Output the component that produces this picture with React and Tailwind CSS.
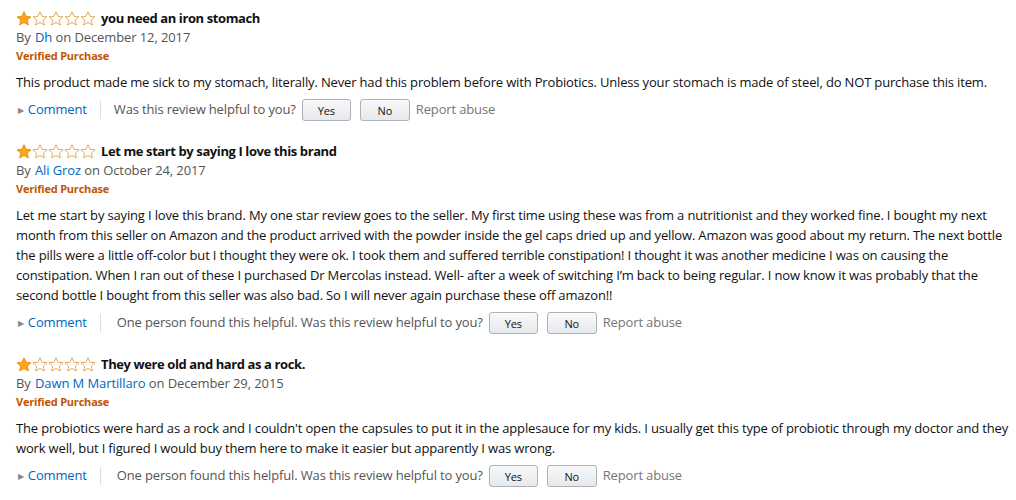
import React from "react";

const font = { fontFamily: '"Open Sans", "Noto Sans", sans-serif' };

function Star({ filled }) {
  return (
    <svg width="16" height="15" viewBox="0 0 24 23" className="shrink-0">
      <path
        d="M12 1.2l3.2 6.9 7.4.8-5.5 5.1 1.5 7.4L12 17.6l-6.6 3.8 1.5-7.4L1.4 8.9l7.4-.8z"
        fill={filled ? "#ffa41c" : "#fff"}
        stroke={filled ? "#e08a00" : "#de9a3a"}
        strokeWidth="1.3"
        strokeLinejoin="round"
      />
    </svg>
  );
}

function Stars() {
  return (
    <div className="flex items-center">
      <Star filled />
      <Star />
      <Star />
      <Star />
      <Star />
    </div>
  );
}

function Btn({ children, w }) {
  return (
    <button
      className={`h-[22px] ${w} rounded-[3px] border border-[#adb1b8] bg-gradient-to-b from-[#f7f8fa] to-[#e7e9ec] text-[11px] text-[#111] leading-none shadow-[inset_0_1px_0_rgba(255,255,255,0.6)]`}
    >
      {children}
    </button>
  );
}

function Review({ title, author, date, body, helpful }) {
  return (
    <div className="flex flex-col">
      <div className="flex items-center gap-[5px] h-[19px]">
        <Stars />
        <span className="text-[13px] font-bold text-[#111] tracking-[-0.4px]">{title}</span>
      </div>
      <div className="h-[19px] flex items-center text-[13px] text-[#555] tracking-[-0.1px]">
        By&nbsp;<span className="text-[#0066c0] ml-[1px]">{author}</span>&nbsp;on {date}
      </div>
      <div className="h-[19px] flex items-center text-[11px] font-bold text-[#c45500] tracking-[-0.2px]">
        Verified Purchase
      </div>
      <div className="mt-[6px] text-[13px] leading-[20px] text-[#111] tracking-[-0.16px]">{body}</div>
      <div className="mt-[6px] flex items-center h-[24px] text-[13px] tracking-[-0.15px]">
        <span className="text-[#888] text-[8px] ml-[2px] mr-[4px]">▶</span>
        <span className="text-[#0066c0]">Comment</span>
        <span className="mx-[13px] h-[18px] w-px bg-[#ddd]" />
        <span className={`text-[#555] ${helpful ? "ml-[3px]" : ""}`}>
          {helpful ? "One person found this helpful. " : ""}Was this review helpful to you?
        </span>
        <span className="ml-[6px]"><Btn w="w-[49px]">Yes</Btn></span>
        <span className="ml-[9px]"><Btn w="w-[50px]">No</Btn></span>
        <span className="ml-[6px] text-[#767676]">Report abuse</span>
      </div>
    </div>
  );
}

export default function App() {
  return (
    <div className="w-[1016px] h-[500px] bg-white overflow-hidden" style={font}>
      <div className="pl-[16px] pr-[3px] pt-[9px] flex flex-col gap-[20px]">
        <Review
          title="you need an iron stomach"
          author="Dh"
          date="December 12, 2017"
          body="This product made me sick to my stomach, literally. Never had this problem before with Probiotics. Unless your stomach is made of steel, do NOT purchase this item."
        />
        <Review
          title="Let me start by saying I love this brand"
          author="Ali Groz"
          date="October 24, 2017"
          helpful
          body="Let me start by saying I love this brand. My one star review goes to the seller. My first time using these was from a nutritionist and they worked fine. I bought my next month from this seller on Amazon and the product arrived with the powder inside the gel caps dried up and yellow. Amazon was good about my return. The next bottle the pills were a little off-color but I thought they were ok. I took them and suffered terrible constipation! I thought it was another medicine I was on causing the constipation. When I ran out of these I purchased Dr Mercolas instead. Well- after a week of switching I’m back to being regular. I now know it was probably that the second bottle I bought from this seller was also bad. So I will never again purchase these off amazon!!"
        />
        <Review
          title="They were old and hard as a rock."
          author="Dawn M Martillaro"
          date="December 29, 2015"
          helpful
          body="The probiotics were hard as a rock and I couldn't open the capsules to put it in the applesauce for my kids. I usually get this type of probiotic through my doctor and they work well, but I figured I would buy them here to make it easier but apparently I was wrong."
        />
      </div>
    </div>
  );
}
